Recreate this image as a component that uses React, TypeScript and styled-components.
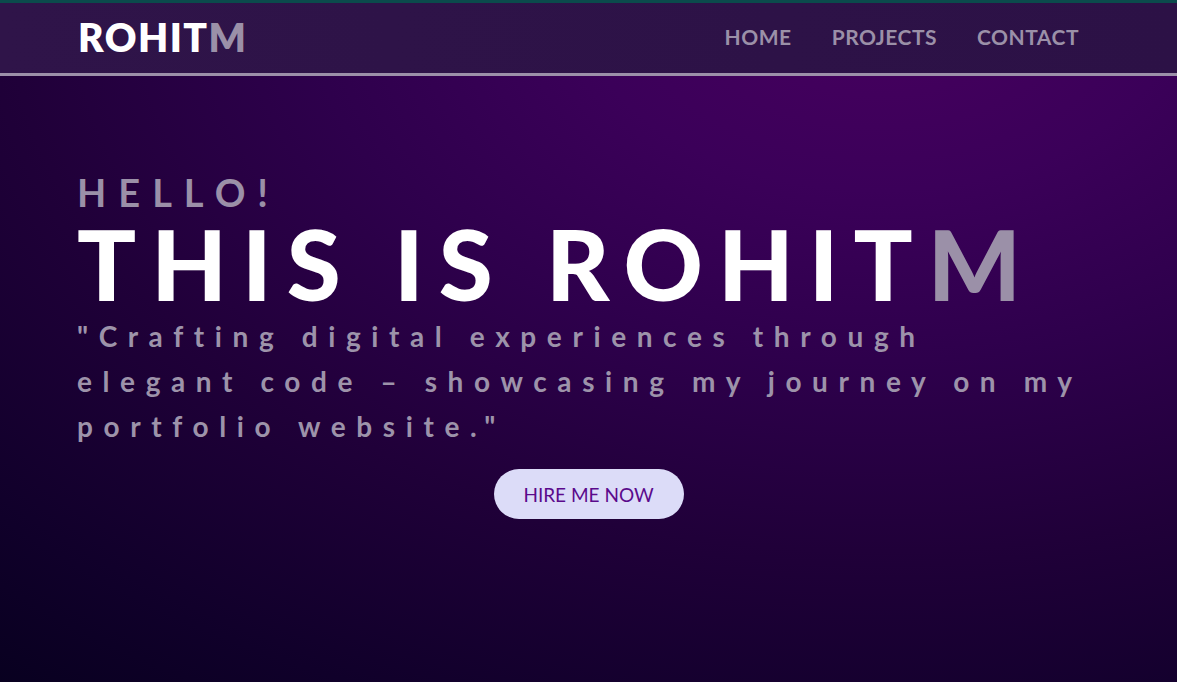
import React from "react";
import styled, { createGlobalStyle } from "styled-components";

const Global = createGlobalStyle`
  html, body { margin: 0; padding: 0; }
  body {
    font-family: "Lato", "Open Sans", sans-serif;
    background: #05001a;
  }
  * { box-sizing: border-box; }
`;

const Page = styled.div`
  width: 100%;
  height: 682px;
  display: flex;
  flex-direction: column;
  overflow: hidden;
  background:
    radial-gradient(ellipse 1500px 950px at 880px 0px, #47005f 0%, #3b0059 20%, #2e004c 38%, #200039 58%, #10002a 80%, #04001a 100%);
`;

const Header = styled.header`
  height: 76px;
  flex: none;
  border-top: 3px solid #0b4b4c;
  border-bottom: 3px solid #9c90a9;
  background: linear-gradient(90deg, #2f1449, #2c1146);
  display: flex;
  align-items: center;
  justify-content: space-between;
  padding: 0 98px 0 78px;
`;

const Logo = styled.div`
  font-size: 39px;
  font-weight: 800;
  color: #ffffff;
  letter-spacing: 1.5px;
  line-height: 1;
  margin-top: -2px;
`;

const Dim = styled.span`
  color: #9b90a8;
`;

const Nav = styled.nav`
  display: flex;
  gap: 40px;
  margin-top: -4px;
`;

const NavLink = styled.a`
  font-size: 21px;
  font-weight: 700;
  color: #9b90a8;
  text-decoration: none;
  letter-spacing: 0.5px;
`;

const Hero = styled.section`
  flex: 1;
  display: flex;
  flex-direction: column;
  padding: 101px 0 0 77px;
`;

const Hello = styled.div`
  font-size: 38px;
  font-weight: 700;
  color: #9b90a8;
  letter-spacing: 12px;
  line-height: 30px;
  height: 30px;
`;

const Title = styled.h1`
  margin: 16px 0 0;
  font-size: 98px;
  font-weight: 900;
  color: #ffffff;
  letter-spacing: 15px;
  line-height: 80px;
  white-space: nowrap;
`;

const Quote = styled.p`
  margin: 11px 0 0;
  max-width: 1015px;
  font-size: 28px;
  font-weight: 700;
  color: #9d93aa;
  letter-spacing: 10.6px;
  line-height: 45px;
`;

const ButtonRow = styled.div`
  display: flex;
  justify-content: center;
  margin-top: 20px;
  margin-left: -77px;
`;

const Hire = styled.button`
  width: 190px;
  height: 50px;
  border: none;
  border-radius: 25px;
  background: #dcdcf8;
  color: #5b0a8c;
  font-family: "Lato", sans-serif;
  font-size: 19px;
  font-weight: 400;
  cursor: pointer;
`;

export default function App() {
  return (
    <>
      <Global />
      <Page>
        <Header>
          <Logo>
            ROHIT<Dim>M</Dim>
          </Logo>
          <Nav>
            <NavLink href="#">HOME</NavLink>
            <NavLink href="#">PROJECTS</NavLink>
            <NavLink href="#">CONTACT</NavLink>
          </Nav>
        </Header>
        <Hero>
          <Hello>HELLO!</Hello>
          <Title>
            THIS IS ROHIT<Dim>M</Dim>
          </Title>
          <Quote>
            "Crafting digital experiences through elegant code – showcasing my journey on my portfolio website."
          </Quote>
          <ButtonRow>
            <Hire>HIRE ME NOW</Hire>
          </ButtonRow>
        </Hero>
      </Page>
    </>
  );
}
